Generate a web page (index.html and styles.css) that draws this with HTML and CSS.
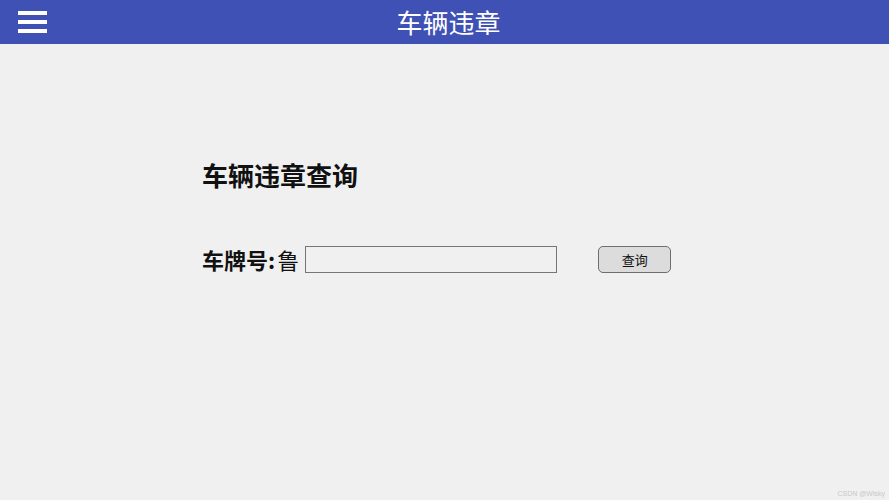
FILE: index.html
```html
<!DOCTYPE html>
<html lang="zh-CN">
<head>
    <meta charset="UTF-8">
    <meta name="viewport" content="width=device-width, initial-scale=1.0">
    <title>车辆违章</title>
    <link rel="stylesheet" href="styles.css">
</head>
<body>
    <header class="app-bar">
        <button class="menu-btn" aria-label="菜单">
            <span></span><span></span><span></span>
        </button>
        <div class="app-title">车辆违章</div>
    </header>
    <main class="page">
        <div class="query-panel">
            <h1 class="query-title">车辆违章查询</h1>
            <div class="query-row">
                <label class="plate-label" for="plate">车牌号:<span class="plate-prefix">鲁</span></label>
                <input type="text" id="plate" class="plate-input">
                <button class="query-btn">查询</button>
            </div>
        </div>
        <div class="watermark">CSDN @Wisky</div>
    </main>
</body>
</html>
```

FILE: styles.css
```css
body {
    margin: 0;
    height: 100vh;
    display: flex;
    flex-direction: column;
    background-color: #f0f0f0;
    font-family: "Noto Sans CJK SC", "Noto Sans", sans-serif;
}
.app-bar {
    height: 44px;
    flex-shrink: 0;
    background-color: #3f51b5;
    display: flex;
    align-items: center;
    position: relative;
}
.menu-btn {
    margin-left: 18px;
    width: 29px;
    padding: 0;
    border: none;
    background: none;
    display: flex;
    flex-direction: column;
    gap: 5px;
}
.menu-btn span {
    display: block;
    height: 4px;
    background: #fff;
}
.app-title {
    flex-grow: 1;
    text-align: center;
    padding-right: 39px;
    color: #fff;
    font-size: 26px;
    line-height: 44px;
}
.page {
    flex-grow: 1;
    position: relative;
}
.query-panel {
    padding: 114px 0 0 202px;
}
.query-title {
    margin: 0;
    font-size: 26px;
    font-weight: bold;
    line-height: 34px;
    color: #111;
}
.query-row {
    margin-top: 51px;
    display: flex;
    align-items: center;
}
.plate-label {
    font-size: 22px;
    font-weight: bold;
    color: #111;
}
.plate-prefix {
    font-weight: normal;
    margin-left: 2px;
}
.plate-input {
    margin: 0 0 0 6px;
    width: 252px;
    padding: 0;
    box-sizing: border-box;
    height: 27px;
    border: 1px solid #767676;
    background: #f0f0f0;
}
.query-btn {
    margin-left: 41px;
    width: 73px;
    height: 27px;
    border: 1px solid #6e6e6e;
    border-radius: 5px;
    background: #dcdcdc;
    font-family: inherit;
    font-size: 13px;
    color: #111;
}
.watermark {
    position: absolute;
    right: 4px;
    bottom: 3px;
    font-family: "Liberation Sans", sans-serif;
    font-size: 7px;
    color: #c8c8c8;
}
```
